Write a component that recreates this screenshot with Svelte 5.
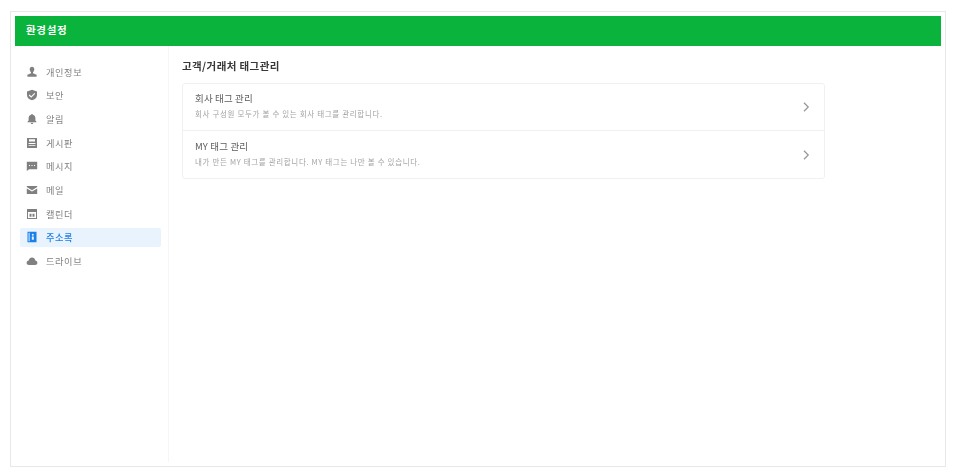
<script>
  const menu = [
    { label: '개인정보', icon: 'user' },
    { label: '보안', icon: 'shield' },
    { label: '알림', icon: 'bell' },
    { label: '게시판', icon: 'board' },
    { label: '메시지', icon: 'message' },
    { label: '메일', icon: 'mail' },
    { label: '캘린더', icon: 'calendar' },
    { label: '주소록', icon: 'contacts', active: true },
    { label: '드라이브', icon: 'cloud' }
  ];

  const tags = [
    { title: '회사 태그 관리', desc: '회사 구성원 모두가 볼 수 있는 회사 태그를 관리합니다.' },
    { title: 'MY 태그 관리', desc: '내가 만든 MY 태그를 관리합니다. MY 태그는 나만 볼 수 있습니다.' }
  ];
</script>

<div class="frame">
  <header class="top">환경설정</header>
  <div class="body">
    <nav class="side">
      {#each menu as item}
        <a class="item" class:active={item.active} href="#top">
          <svg viewBox="0 0 12 12" width="12" height="12" fill="currentColor">
            {#if item.icon === 'user'}
              <path d="M6 .8c1.400 0 2.300 1 2.300 2.500S7.400 5.900 7 6.200v1l3.600 1.500v2.100H1.400V8.700L5 7.200v-1c-.4-.3-1.300-1.400-1.300-2.900S4.600.8 6 .8z" />
            {:else if item.icon === 'shield'}
              <path fill-rule="evenodd" d="M6 .8l5 1.800v3.300c0 2.800-2.200 4.600-5 5.400-2.800-.8-5-2.600-5-5.400V2.600zM3.600 5.600l-.8.8L5.200 8.800 9.200 4.800l-.8-.8-3.200 3.200z" />
            {:else if item.icon === 'bell'}
              <path d="M6 .9c.5 0 .9.300.9.800 1.700.4 2.500 1.800 2.500 3.500v2.300l1.100 1.200v.6h-9v-.6l1.100-1.200V5.200c0-1.700.8-3.100 2.500-3.500 0-.5.400-.8.900-.8z" />
              <path d="M4.700 9.800h2.600c0 .8-.5 1.300-1.300 1.300s-1.300-.5-1.300-1.300z" />
            {:else if item.icon === 'board'}
              <path fill-rule="evenodd" d="M1 1h10v10H1zM3 2.200v2.300h6V2.200zM2.600 6v.9h6.800V6zM2.600 8.200v.9h6.800v-.9z" />
            {:else if item.icon === 'message'}
              <path fill-rule="evenodd" d="M.8 1.800h10.400v7.400H3.200L.8 11zM3 4.900v1h1v-1zM5.500 4.900v1h1v-1zM8 4.900v1h1v-1z" />
            {:else if item.icon === 'mail'}
              <path d="M.8 2h10.400v1L6 6.200.8 3z" />
              <path d="M.8 4.400L6 7.600l5.200-3.200V10H.8z" />
            {:else if item.icon === 'calendar'}
              <path fill-rule="evenodd" d="M1 1h10v10H1zM2 4v6h8V4zM3.500 5.800h2v3h-2zM6.500 5.800h2v3h-2z" />
            {:else if item.icon === 'contacts'}
              <path fill-rule="evenodd" d="M1.500.8h9v10.400h-9zM3.600 1.800h-1v8.400h1zM6.800 2.800a1 1 0 100 2 1 1 0 000-2zM5.800 8.800h2V5.600h-2z" />
            {:else if item.icon === 'cloud'}
              <path d="M3 10C1.600 10 .6 9 .6 7.700c0-1.200.9-2.200 2.100-2.300C3.100 3.800 4.400 2.600 6 2.600c1.700 0 3 1.200 3.300 2.800 1.200.1 2.100 1.100 2.100 2.300C11.400 9 10.400 10 9 10z" />
            {/if}
          </svg>
          <span>{item.label}</span>
        </a>
      {/each}
    </nav>
    <main class="content">
      <h2>고객/거래처 태그관리</h2>
      <ul class="card">
        {#each tags as tag}
          <li class="row">
            <div class="text">
              <strong>{tag.title}</strong>
              <small>{tag.desc}</small>
            </div>
            <svg class="chevron" viewBox="0 0 7 10" width="7" height="10" fill="none" stroke="currentColor" stroke-width="1.300">
              <path d="M1 .8l4.200 4.200L1 9.200" />
            </svg>
          </li>
        {/each}
      </ul>
    </main>
  </div>
</div>

<style>
  :global(body) {
    background: #fff;
    font-family: "Noto Sans CJK KR", "Noto Sans", sans-serif;
  }

  .frame {
    width: 936px;
    height: 456px;
    margin: 11px 0 0 10px;
    border: 1px solid #e8e8e8;
    padding: 4px;
    box-sizing: border-box;
    display: flex;
    flex-direction: column;
    filter: blur(0.5px);
  }

  .top {
    width: 926px;
    height: 30px;
    flex: none;
    background: #0ab43c;
    color: #fff;
    font-size: 10.500px;
    font-weight: 700;
    letter-spacing: 0.7px;
    line-height: 28px;
    padding-left: 11px;
    box-sizing: border-box;
  }

  .body {
    flex: 1;
    display: flex;
    min-height: 0;
  }

  .side {
    width: 154px;
    flex: none;
    box-sizing: border-box;
    border-right: 1px solid #f6f6f6;
    padding: 16px 7px 0 5px;
    display: flex;
    flex-direction: column;
    gap: 4.700px;
  }

  .item {
    height: 19px;
    flex: none;
    display: flex;
    align-items: center;
    gap: 8px;
    padding-left: 6px;
    border-radius: 2px;
    color: #808080;
    font-size: 9.200px;
    letter-spacing: 0.6px;
    text-decoration: none;
  }

  .item.active {
    background: #e8f3fe;
    color: #1a7fe8;
    font-weight: 500;
  }

  .content {
    flex: 1;
    padding: 13px 0 0 13px;
  }

  h2 {
    margin: 0 0 11px;
    font-size: 10.500px;
    font-weight: 700;
    letter-spacing: 0.4px;
    line-height: 13px;
    color: #383838;
  }

  .card {
    list-style: none;
    margin: 0;
    padding: 0;
    width: 641px;
    border: 1px solid #f0f0f0;
    border-radius: 3px;
  }

  .row {
    height: 46px;
    display: flex;
    align-items: center;
    justify-content: space-between;
    padding: 0 14px 0 12px;
  }

  .row + .row {
    height: 47px;
    border-top: 1px solid #f0f0f0;
  }

  .text {
    display: flex;
    flex-direction: column;
    gap: 3px;
    margin-top: -3px;
  }

  strong {
    font-size: 9.500px;
    font-weight: 400;
    letter-spacing: 0.15px;
    line-height: 13px;
    color: #5c5c5c;
  }

  small {
    font-size: 7.500px;
    letter-spacing: 0.66px;
    line-height: 11px;
    color: #a3a3a3;
  }

  .chevron {
    color: #999;
  }
</style>
